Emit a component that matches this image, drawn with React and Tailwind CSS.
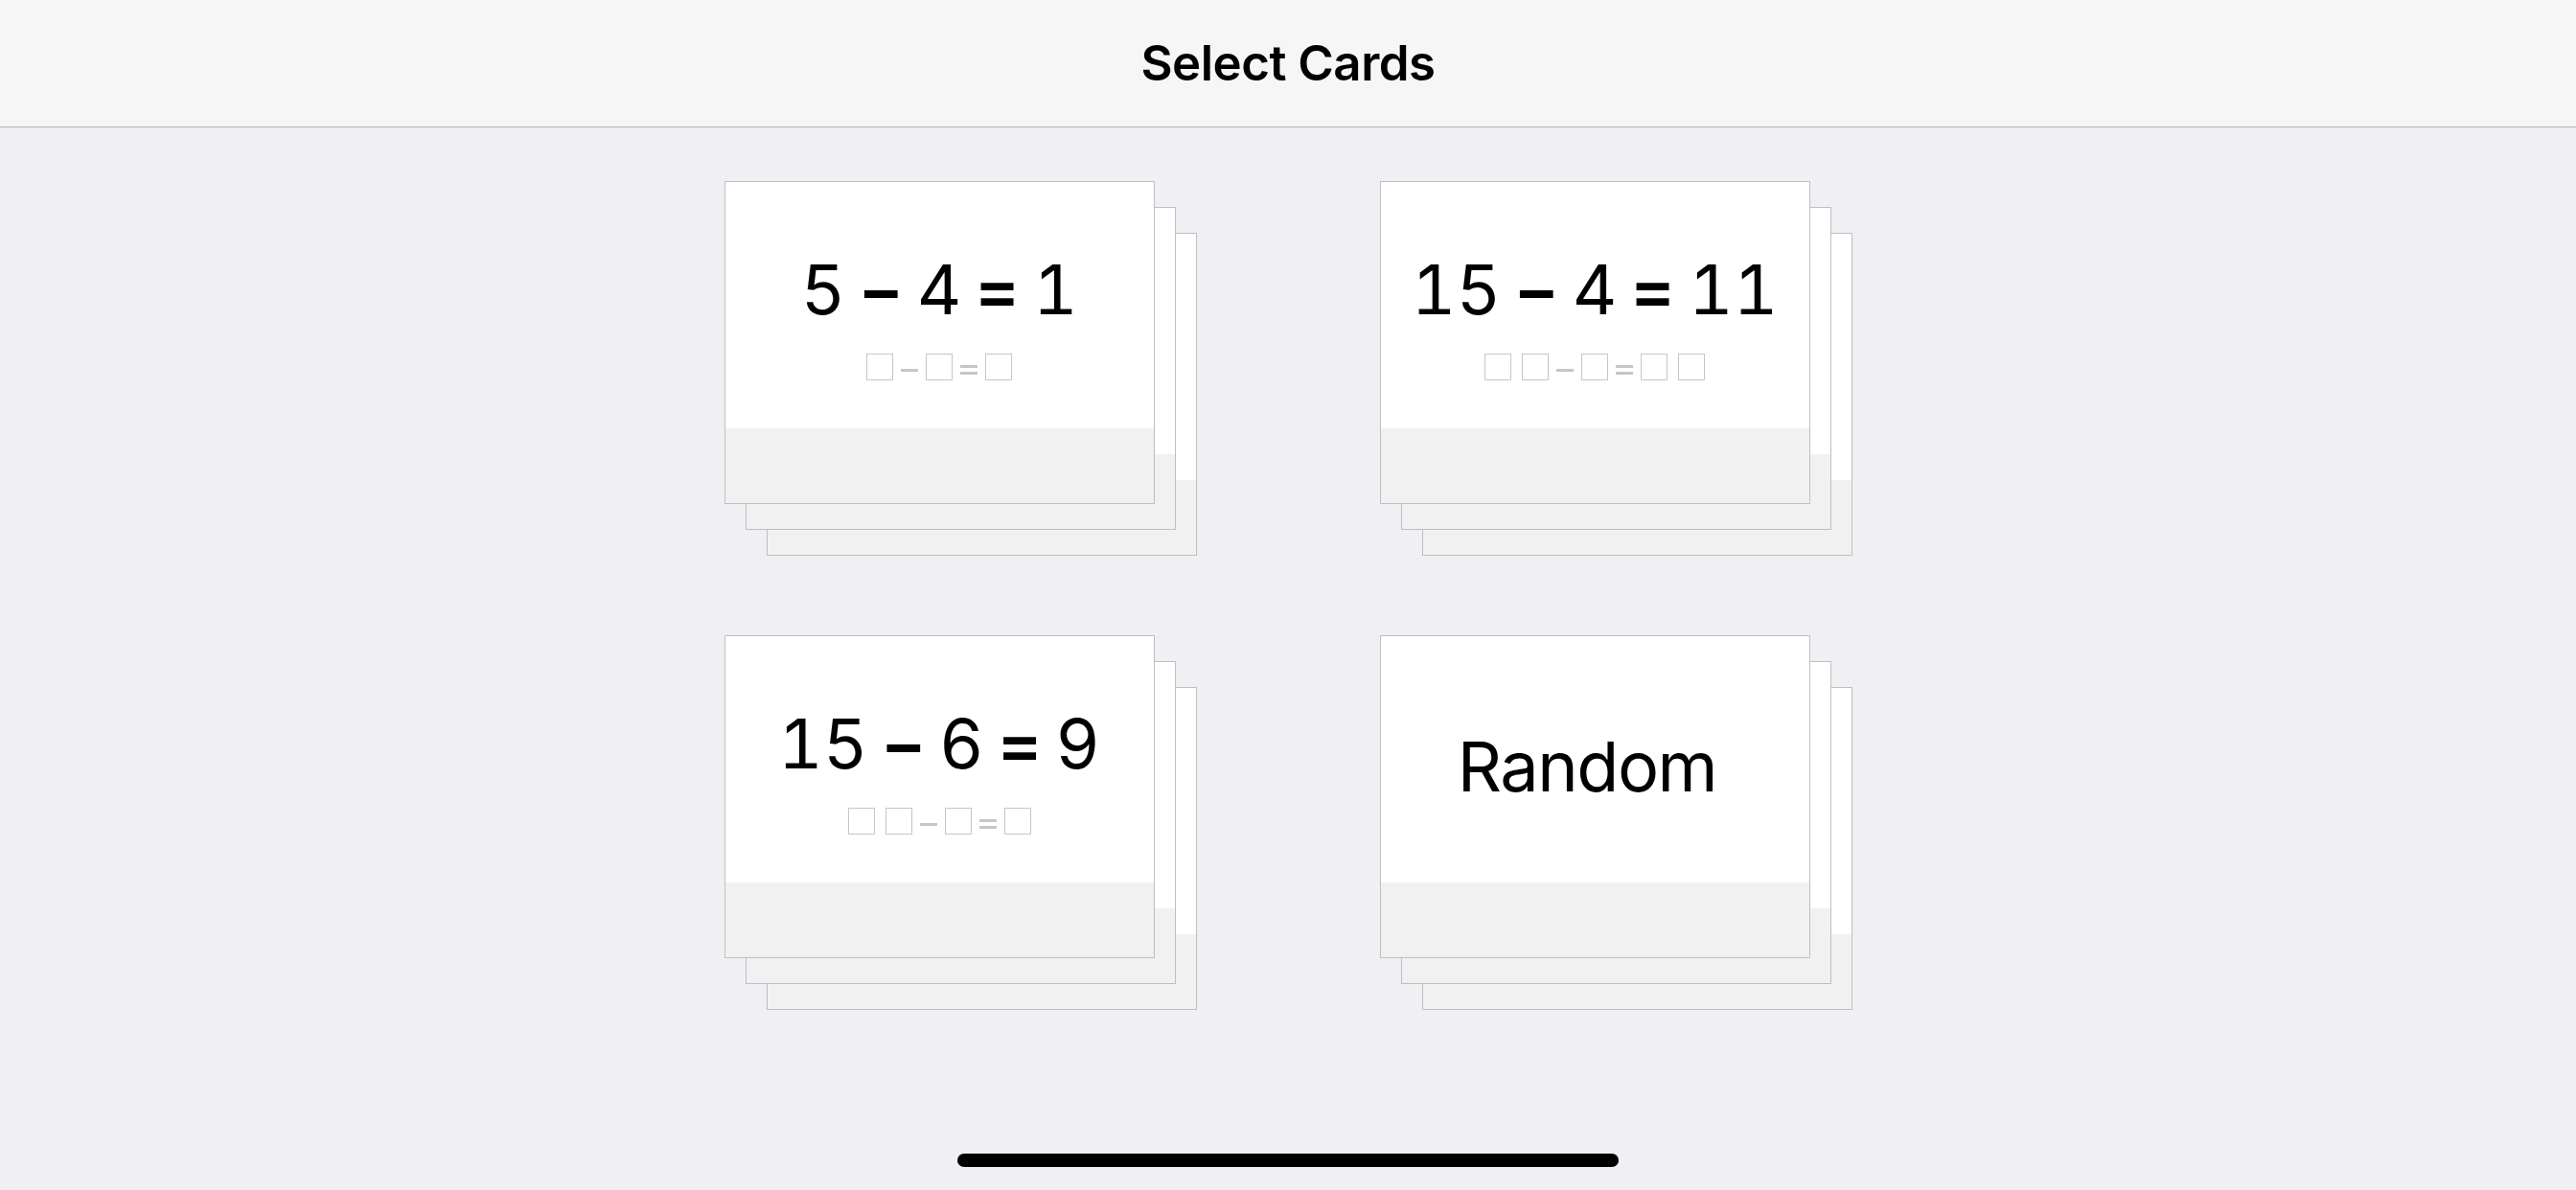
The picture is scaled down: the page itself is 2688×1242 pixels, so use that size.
import React from "react";

const cards = [
  { label: ["5", "−", "4", "=", "1"], pattern: [1, "-", 1, "=", 1] },
  { label: ["15", "−", "4", "=", "11"], pattern: [2, "-", 1, "=", 2] },
  { label: ["15", "−", "6", "=", "9"], pattern: [2, "-", 1, "=", 1] },
  { label: "Random" },
];

function Boxes({ count }) {
  return (
    <div className="flex items-center gap-[11px]">
      {Array.from({ length: count }).map((_, i) => (
        <div key={i} className="w-[28px] h-[28px] border-[1.5px] border-[#c6c6c6]" />
      ))}
    </div>
  );
}

function Pattern({ pattern }) {
  return (
    <div className="mt-[31px] flex items-center gap-[8px]">
      {pattern.map((p, i) => {
        if (p === "-") return <div key={i} className="mt-[6px] w-[18px] h-[3px] bg-[#c6c6c6]" />;
        if (p === "=")
          return (
            <div key={i} className="mt-[6px] flex flex-col gap-[4px]">
              <div className="w-[18px] h-[3px] bg-[#c6c6c6]" />
              <div className="w-[18px] h-[3px] bg-[#c6c6c6]" />
            </div>
          );
        return <Boxes key={i} count={p} />;
      })}
    </div>
  );
}

function Sheet({ children, className }) {
  return (
    <div className={"absolute w-[449px] h-[337px] border-[1.5px] border-[#bfbfbf] flex flex-col " + className}>
      <div className="h-[257px] bg-white flex flex-col items-center">{children}</div>
      <div className="flex-1 bg-[#f1f1f1]" />
    </div>
  );
}

function Equation({ parts }) {
  return (
    <div className="pt-[76px] flex items-baseline gap-[14px] text-[72px] leading-none text-black tabular-nums">
      {parts.map((p, i) =>
        p === "−" || p === "=" ? (
          <span key={i} className="font-semibold">
            {p}
          </span>
        ) : (
          <span key={i}>{p}</span>
        )
      )}
    </div>
  );
}

function Stack({ card }) {
  return (
    <div className="relative w-[493px] h-[391px]">
      <Sheet className="left-[44px] top-[54px]" />
      <Sheet className="left-[22px] top-[27px]" />
      <Sheet className="left-0 top-0">
        {Array.isArray(card.label) ? (
          <>
            <Equation parts={card.label} />
            <Pattern pattern={card.pattern} />
          </>
        ) : (
          <div className="pt-[100px] mr-[16px] text-[72px] leading-none text-black tracking-[-1.5px]">
            {card.label}
          </div>
        )}
      </Sheet>
    </div>
  );
}

export default function App() {
  return (
    <div className="h-screen w-full bg-[#efeff4] flex flex-col font-['Inter',sans-serif]">
      <header className="h-[133px] shrink-0 bg-[#f6f6f6] border-b border-[#b3b3b3] flex items-center justify-center">
        <h1 className="text-[51px] font-semibold text-black tracking-[-0.5px]">Select Cards</h1>
      </header>

      <main className="flex-1 flex flex-col items-center pt-[56px]">
        <div className="grid grid-cols-[493px_493px] gap-x-[191px] gap-y-[83px]">
          {cards.map((c, i) => (
            <Stack key={i} card={c} />
          ))}
        </div>
        <div className="mt-auto mb-[24px] w-[690px] h-[14px] rounded-full bg-black" />
      </main>
    </div>
  );
}
